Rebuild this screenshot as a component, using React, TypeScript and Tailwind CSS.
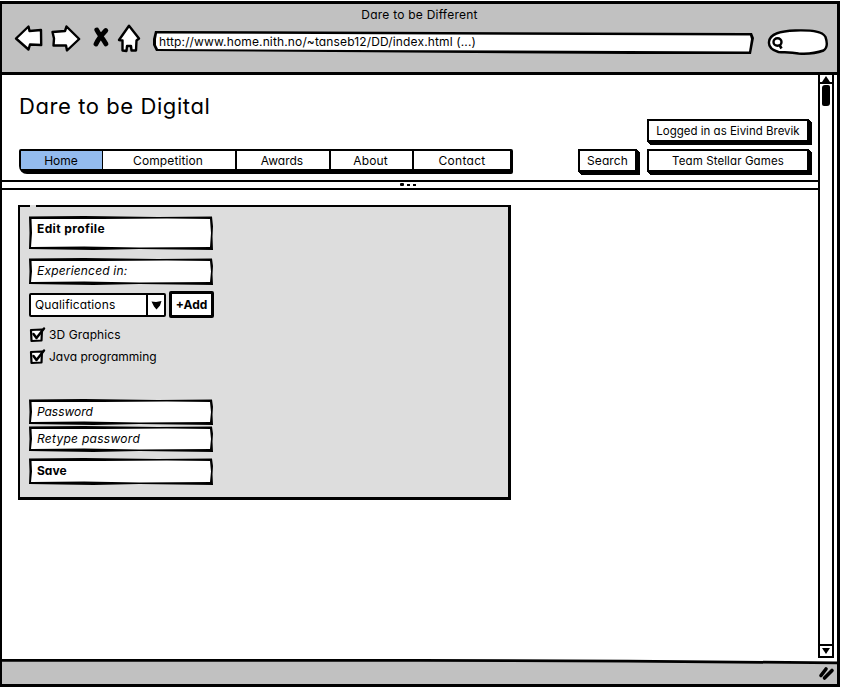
import type { ReactNode } from "react";

function Field({ children, className }: { children: ReactNode; className: string }) {
  return (
    <div
      className={`flex w-[184px] bg-black text-[12px] [clip-path:polygon(0_0.5px,30%_0,70%_1px,calc(100%_-_1px)_0.5px,100%_30%,calc(100%_-_0.5px)_60%,100%_100%,60%_calc(100%_-_1px),35%_100%,0_calc(100%_-_1px),0.5px_50%)] ${className}`}
    >
      <div className="flex w-full items-center whitespace-nowrap bg-white pl-[8px] [clip-path:polygon(2.5px_3px,40%_3px,75%_2.5px,calc(100%_-_3px)_3px,calc(100%_-_2px)_50%,calc(100%_-_3px)_calc(100%_-_3px),60%_calc(100%_-_2.5px),30%_calc(100%_-_3.5px),2px_calc(100%_-_3px),3px_50%)]">
        {children}
      </div>
    </div>
  );
}

function ShadowButton({ children, className }: { children: ReactNode; className: string }) {
  return (
    <button
      className={`flex h-[23px] items-center justify-center whitespace-nowrap border-2 border-black bg-white shadow-[1px_1px_0_0_#000,2px_2px_0_0_#000,3px_3px_0_0_#000] ${className}`}
    >
      {children}
    </button>
  );
}

function Check({ label, className }: { label: string; className: string }) {
  return (
    <label className="flex h-[22px] items-center text-[12px]">
      <svg className="-mt-[2px]" width="18" height="17" viewBox="0 0 18 17" fill="none" stroke="#000" strokeLinejoin="round" strokeLinecap="round">
        <path d="M2 4 13 3.500 12.500 14.500 2.500 15Z" fill="#fff" strokeWidth="2.200" />
        <path d="M4.500 8 7.500 12 15 2.500" strokeWidth="2.500" />
      </svg>
      <span className={`ml-[2px] whitespace-nowrap ${className}`}>{label}</span>
    </label>
  );
}

function Header() {
  return (
    <header className="h-[71px] shrink-0 border-b-[3px] border-black bg-[#c1c1c1]">
      <div className="flex h-[20px] items-center justify-center pt-[2px] text-[12px] tracking-[0.23px]">Dare to be Different</div>
      <div className="flex items-start">
        <svg className="-mt-[2px] ml-[11px] shrink-0" width="138" height="32" viewBox="13 21.500 138 32" fill="#fff" stroke="#000" strokeWidth="2.400" strokeLinejoin="round">
          <path d="M16 38 28.500 26 29.500 30.500 41 29.500 41.200 44.500 30 44 28.500 49Z" />
          <path d="M52.500 31.500 65 30.500 66.500 26 79.200 38.500 67 50 66 45 53.500 45 54 38Z" />
          <path d="M96.800 29.500C99 34 103 38 106 43.500M105.800 30C102 34 98.500 38 96 43.500" fill="none" strokeWidth="4.800" strokeLinecap="round" />
          <path d="M129 25.300 139 38 136.500 40 136 50 131.500 50 131 45.500 127 45.500 126.500 50.500 122.500 50 122.500 40 119 39.500Z" />
        </svg>
        <div className="ml-[2px] mt-[7px] h-[23px] w-[601px] bg-black [clip-path:polygon(2px_0,590px_2px,599px_2px,601px_7px,598px_100%,480px_100%,180px_21px,3px_20px,0_14px,0_8px)]">
          <div className="flex h-full items-center bg-white pb-px pl-[6px] text-[12px] [clip-path:polygon(4px_2.5px,597px_4.5px,598px_8px,596px_20.5px,200px_19px,5px_18px,3px_14px,3px_8px)]">
            <span className="tracking-[0.14px]">http://www.home.nith.no/~tanseb12/DD/index.html (...)</span>
          </div>
        </div>
        <svg className="ml-[13px] mt-[4px] shrink-0" width="62" height="28" viewBox="767.500 28 62 28" stroke="#000" fill="none">
          <path d="M769.500 42C770 33 782 31 796 30.500 812 30 823 31 826 37 828 43 828 48 824 50.500 817 53 806 54 799 53.500 791 52 785 52.500 779 52 772 50 769 47 769.500 42Z" fill="#fff" strokeWidth="2.400" />
          <ellipse cx="778" cy="42" rx="4" ry="3.700" strokeWidth="2.400" />
          <path d="M780 45 782 48.500" strokeWidth="2.600" />
        </svg>
      </div>
    </header>
  );
}

const tabs = [
  { label: "Home", className: "w-[82px] bg-[#93bbee] border-r pr-px" },
  { label: "Competition", className: "w-[134px] border-r-2 tracking-[0.1px] pr-[2px]" },
  { label: "Awards", className: "w-[94px] border-r-2 pr-[2px]" },
  { label: "About", className: "w-[83px] border-r-2 tracking-[0.1px] pr-[2px]" },
  { label: "Contact", className: "w-[96px] tracking-[0.3px]" },
];

function Scrollbar() {
  return (
    <div className="mr-[3px] flex h-[583px] w-[16px] shrink-0 flex-col items-center border-x-2 border-b-2 border-black bg-white">
      <div className="flex h-[9px] w-full items-center justify-center border-b-2 border-black">
        <svg width="8" height="6"><path d="M4 0 8 6H0Z" /></svg>
      </div>
      <div className="mt-px h-[21px] w-[8px] rounded-[3px_2px_3px_2px] bg-black" />
      <div className="mt-auto flex h-[12px] w-full items-center justify-center border-t-2 border-black">
        <svg width="8" height="6"><path d="M4 6 8 0H0Z" /></svg>
      </div>
    </div>
  );
}

export default function App() {
  return (
    <div className="h-[687px] w-[841px] overflow-hidden bg-white pt-px font-['Inter','Liberation_Sans',sans-serif] leading-none text-black [font-feature-settings:'cv11']">
      <div className="flex h-[686px] w-[840px] flex-col border-y-[3px] border-l-2 border-r-[3px] border-black">
        <Header />
        <div className="flex h-[584px] shrink-0">
          <main className="min-w-0 grow">
            <section className="flex h-[105px] justify-between">
              <div className="ml-[17px]">
                <h1 className="mt-[18px] h-[26px] whitespace-nowrap text-[22px] leading-[26px] tracking-[0.58px]">Dare to be Digital</h1>
                <nav className="mt-[30px] flex h-[25px] w-[494px] rounded-[2px_2px_2px_8px] border-b-[5px] border-l-2 border-r-[3px] border-t-2 border-black">
                  {tabs.map((t) => (
                    <a key={t.label} className={`flex items-center justify-center border-black pt-px text-[12px] ${t.className}`}>{t.label}</a>
                  ))}
                </nav>
              </div>
              <div className="mr-[9px] mt-[44px] flex items-end gap-[10px] self-start">
                <ShadowButton className="w-[59px] pt-px text-[12px] tracking-[0.1px]">Search</ShadowButton>
                <div className="flex flex-col gap-[7px]">
                  <ShadowButton className="w-[162px] pt-[2px] text-[11.5px]">Logged in as Eivind Brevik</ShadowButton>
                  <ShadowButton className="w-[162px] pt-[2px] text-[11.5px] tracking-[0.1px]">Team Stellar Games</ShadowButton>
                </div>
              </div>
            </section>
            <div className="flex h-[10px] items-start justify-center gap-[3px] border-y-2 border-black pr-[4px] pt-px">
              <i className="h-[3px] w-[4px] rounded-[1px] bg-black" />
              <i className="mt-px h-[2px] w-[3px] bg-black" />
              <i className="mt-px h-[2px] w-[3px] bg-black" />
            </div>
            <section className="ml-[16px] mt-[15px] h-[295px] w-[493px] border-b-[3px] border-l-2 border-r-[3px] border-t-2 border-black bg-[#ddd]">
              <div className="-mt-[2px] ml-[10px] h-[2px] w-[6px] bg-[#ddd]" />
              <div className="ml-[9px] mt-[9px] flex flex-col">
                <Field className="h-[34px] font-bold">
                  <span className="mb-[9px] tracking-[0.38px]">Edit profile</span>
                </Field>
                <Field className="mt-[8px] h-[27px] pb-0 italic tracking-[0.18px]">
                  <span className="-mt-px">Experienced in:</span>
                </Field>
                <div className="mt-[6px] flex h-[27px] items-center gap-[3px]">
                  <div className="flex h-[24px] w-[137px] rounded-[2px] border-2 border-black bg-white text-[12px]">
                    <span className="flex grow items-center pl-[4px] tracking-[0.14px]">Qualifications</span>
                    <span className="flex w-[18px] items-center justify-center border-l-2 border-black">
                      <svg width="11" height="10"><path d="M0.500 1.500 5 2 10.500 1 9 5.500 5.500 9.500 3 6.500Z" /></svg>
                    </span>
                  </div>
                  <button className="flex h-[27px] w-[45px] items-center justify-center rounded-[2px] border-[3px] border-black bg-white text-[12px] font-bold">+Add</button>
                </div>
                <div className="mt-[6px] h-[75px]">
                  <Check label="3D Graphics" className="tracking-[0.1px]" />
                  <Check label="Java programming" className="tracking-[0px]" />
                </div>
                <Field className="h-[26px] italic tracking-[-0.05px]">Password</Field>
                <Field className="mt-px h-[26px] italic tracking-[0.28px]">Retype password</Field>
                <Field className="mt-[6px] h-[27px] font-bold">
                  <span className="-mt-[2px]">Save</span>
                </Field>
              </div>
            </section>
          </main>
          <Scrollbar />
        </div>
        <footer className="min-h-0 grow bg-black [clip-path:polygon(0_0,50%_0,75%_3%,100%_10%,100%_100%,0_100%)]">
          <div className="flex h-full items-center justify-end bg-[#c1c1c1] pr-[2px] pt-[3px] [clip-path:polygon(0_11%,50%_11%,75%_14%,100%_21%,100%_100%,0_100%)]">
            <svg width="17" height="16" stroke="#000" strokeWidth="3.600" strokeLinecap="round"><path d="M3 10.500 8 4M6.500 13 14 5.500" /></svg>
          </div>
        </footer>
      </div>
    </div>
  );
}
